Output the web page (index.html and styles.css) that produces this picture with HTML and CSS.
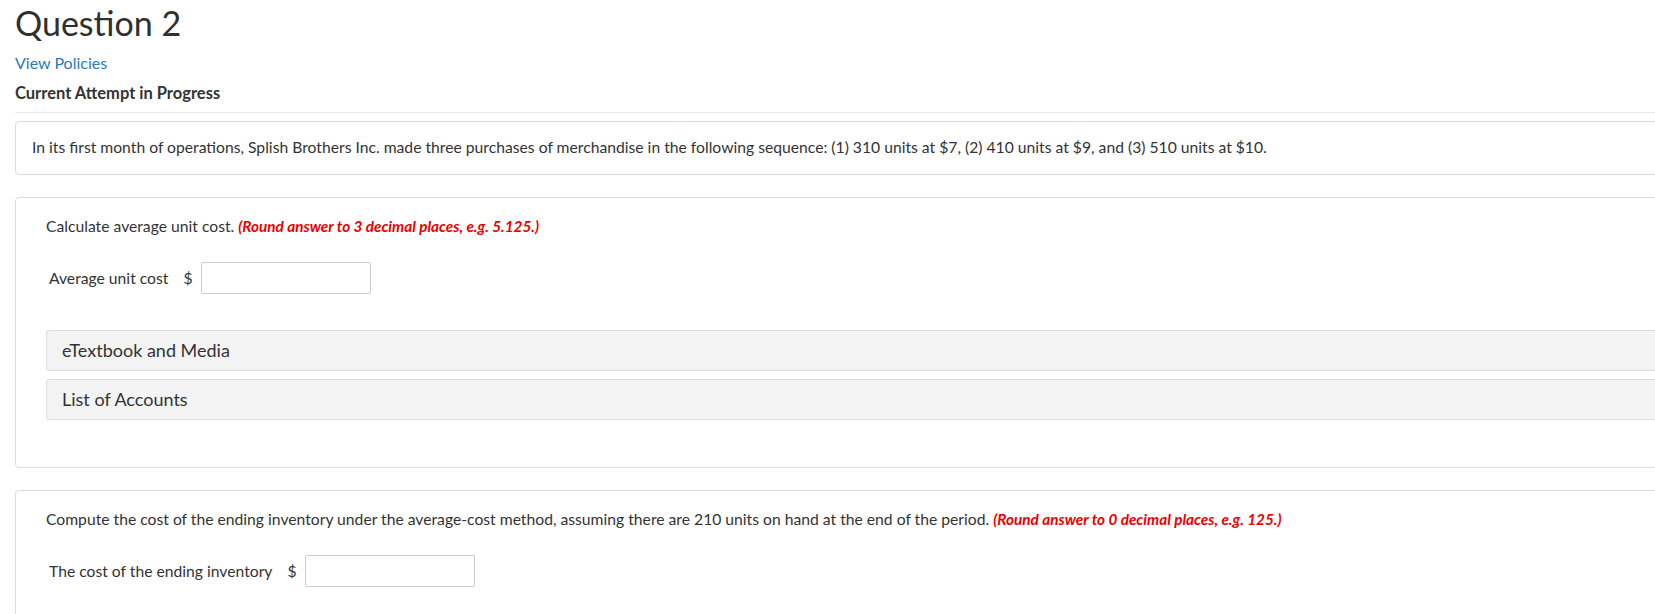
FILE: index.html
```html
<!DOCTYPE html>
<html lang="en">
<head>
<meta charset="utf-8">
<title>Question 2</title>
<link rel="stylesheet" href="styles.css">
</head>
<body>
<main class="page">
  <h1 class="q-title">Question 2</h1>
  <a class="policies" href="#">View Policies</a>
  <div class="attempt">Current Attempt in Progress</div>
  <hr class="rule">

  <section class="card intro">
    <p class="text">In its first month of operations, Splish Brothers Inc. made three purchases of merchandise in the following sequence: (1) 310 units at $7, (2) 410 units at $9, and (3) 510 units at $10.</p>
  </section>

  <section class="card part">
    <p class="prompt">Calculate average unit cost. <em class="hint">(Round answer to 3 decimal places, e.g. 5.125.)</em></p>
    <div class="answer-row">
      <label class="answer-label">Average unit cost</label>
      <span class="currency">$</span>
      <input class="answer-input" type="text">
    </div>
    <div class="resources">
      <div class="resource">eTextbook and Media</div>
      <div class="resource">List of Accounts</div>
    </div>
  </section>

  <section class="card part">
    <p class="prompt">Compute the cost of the ending inventory under the average-cost method, assuming there are 210 units on hand at the end of the period. <em class="hint">(Round answer to 0 decimal places, e.g. 125.)</em></p>
    <div class="answer-row">
      <label class="answer-label">The cost of the ending inventory</label>
      <span class="currency">$</span>
      <input class="answer-input" type="text">
    </div>
  </section>
</main>
</body>
</html>
```

FILE: styles.css
```css
html, body {
  margin: 0;
  padding: 0;
  background: #fff;
  overflow: hidden;
}

body {
  font-family: Lato, "Noto Sans", "Liberation Sans", sans-serif;
  color: #333;
}

.page {
  padding-left: 15px;
  width: 1720px;
}

.q-title {
  margin: 3px 0 0;
  font-size: 34px;
  font-weight: 400;
  line-height: 40px;
  color: #2f2f2f;
}

.policies {
  display: block;
  margin-top: 10px;
  font-size: 16px;
  line-height: 20px;
  color: #2a7ab8;
  text-decoration: none;
}

.attempt {
  margin-top: 10px;
  font-size: 16.5px;
  font-weight: 700;
  line-height: 20px;
  color: #333;
}

.rule {
  height: 0;
  border: 0;
  border-top: 1px solid #e9e9e9;
  margin: 9px 0 8px;
}

.card {
  border: 1px solid #dcdcdc;
  border-radius: 4px;
  margin-bottom: 22px;
}

.intro {
  padding: 15px 16px 16px;
}

.text {
  margin: 0;
  font-size: 15.7px;
  line-height: 21px;
}

.part {
  padding: 17px 30px 47px;
}

.prompt {
  margin: 0;
  font-size: 15.7px;
  line-height: 22px;
}

.hint {
  color: #ec0000;
  font-size: 15.3px;
  font-weight: 700;
  font-style: italic;
}

.answer-row {
  display: flex;
  align-items: center;
  margin-top: 25px;
  font-size: 15.7px;
}

.answer-label {
  padding-left: 3px;
  margin-right: 15px;
}

.currency {
  margin-right: 8px;
}

.answer-input {
  box-sizing: border-box;
  width: 170px;
  height: 32px;
  border: 1px solid #cccccc;
  border-radius: 2px;
  margin: 0;
  padding: 4px 6px;
  font: inherit;
}

.resources {
  display: flex;
  flex-direction: column;
  gap: 8px;
  margin-top: 36px;
}

.resource {
  border: 1px solid #dcdcdc;
  border-radius: 3px;
  background: #f3f3f3;
  padding: 0 15px;
  font-size: 18px;
  line-height: 39px;
  color: #333;
}
```
